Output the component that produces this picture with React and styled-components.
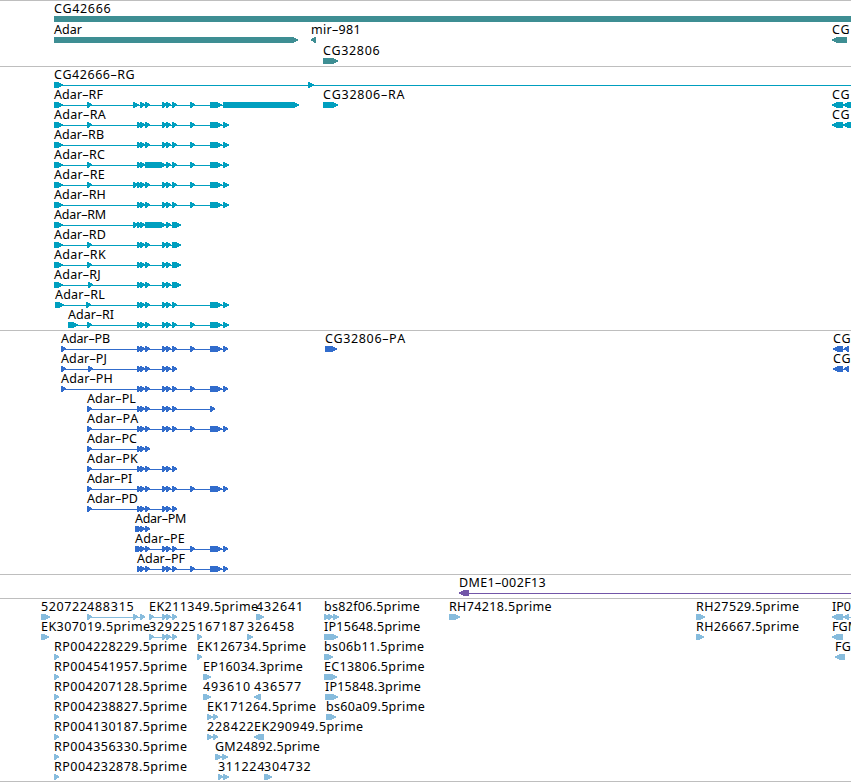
import React from "react";
import styled, { createGlobalStyle } from "styled-components";

const FONT = '12.5px "Noto Sans"';
const VIEW_WIDTH = 851;

const GlobalStyle = createGlobalStyle`
  * { box-sizing: border-box; }
  body { margin: 0; background: #fff; overflow: hidden; }
`;

const Browser = styled.main`
  width: ${VIEW_WIDTH}px;
  height: 782px;
  overflow: hidden;
  display: flex;
  flex-direction: column;
  background: #fff;
  border-bottom: 1px solid #bebebe;
`;

const TrackPanel = styled.section`
  flex: none;
  height: ${(p) => p.$height}px;
  padding-top: 2px;
  border-top: 1px solid #bebebe;
  color: ${(p) => p.$color};
  overflow: hidden;
`;

const TrackRow = styled.div`
  height: ${(p) => p.$pitch}px;
  display: grid;
  grid-template-rows: 13px 6px;
`;

const LabelLane = styled.div`
  display: grid;
  width: ${VIEW_WIDTH}px;
  overflow: visible;
`;

const Label = styled.span`
  grid-area: 1 / 1;
  justify-self: start;
  font: ${FONT}, sans-serif;
  line-height: 12px;
  white-space: pre;
  color: #000;
  font-kerning: none;
`;

const GlyphLane = styled.svg`
  display: block;
  fill: currentColor;
  shape-rendering: crispEdges;
`;

const measureContext = document.createElement("canvas").getContext("2d");

function spacingFor(text, width) {
  if (!width) return 0;
  measureContext.font = FONT;
  return (width - measureContext.measureText(text).width) / text.length;
}

function Exon({ start, end, reverse }) {
  const length = end - start;
  const shoulder = length > 6 ? 5.4 : length - 0.9;
  const points = reverse
    ? `${end},0 ${start + shoulder},0 ${start},2.3 ${start},3.6 ${start + shoulder},6 ${end},6`
    : `${start},0 ${end - shoulder},0 ${end},2.3 ${end},3.6 ${end - shoulder},6 ${start},6`;
  return <polygon points={points} />;
}

function Feature({ exons, reverse, solid, extend }) {
  const start = exons[0][0];
  const end = extend ? VIEW_WIDTH : exons[exons.length - 1][1];
  if (solid) return <rect x={start} y="0" width={end - start} height="6" />;
  return (
    <g>
      {(exons.length > 1 || extend) && <rect x={start} y="3" width={end - start} height="1" />}
      {exons.map(([a, b], i) => (
        <Exon key={i} start={a} end={b} reverse={reverse} />
      ))}
    </g>
  );
}

const feature = (name, x, width, exons, options = {}) => ({ name, x, width, exons, ...options });

const LEFT = { reverse: true };
const START = [54, 63];
const E2 = [87, 92];
const E133 = [133, 138];
const TRIO = [[137, 142], [140, 145], [145, 150]];
const LONG = [[137, 142], [140, 145], [145, 166], [166, 171]];
const PAIR = [[162, 167], [166, 171]];
const E172 = [172, 177];
const E190 = [190, 195];
const CLUSTER = [[210, 215], [212, 218], [213, 222]];
const TAIL = [...CLUSTER, [223, 229]];
const PTAIL = [...CLUSTER, [223, 228]];
const MIDDLE = [...TRIO, ...PAIR, E172];
const SHORT = [...TRIO, ...PAIR, [172, 181]];
const FULL = [...MIDDLE, E190, ...TAIL];
const PFULL = [...MIDDLE, E190, ...PTAIL];

const rightTranscript = feature("CG", 832, 18, [[832, 843], [843, 853]], LEFT);
const rightProtein = feature("CG", 833, 18, [[833, 843], [844, 849]], LEFT);

const geneRows = [
  [feature("CG42666", 54, 57, [[54, 851]], { solid: true })],
  [
    feature("Adar", 54, 28, [[54, 298]]),
    feature("mir–981", 311, 50, [[311, 316]], LEFT),
    feature("CG", 832, 18, [[832, 847]], LEFT),
  ],
  [feature("CG32806", 323, 57, [[323, 338]])],
];

const transcriptRows = [
  [feature("CG42666–RG", 54, 81, [START, [308, 314]], { extend: true })],
  [
    feature("Adar–RF", 54, 49, [START, E2, [133, 139], [140, 145], [145, 150], ...PAIR, E172, E190, ...CLUSTER, [223, 299]]),
    feature("CG32806–RA", 323, 82, [[323, 328], [325, 338]]),
    rightTranscript,
  ],
  [feature("Adar–RA", 54, 52, [START, E2, ...FULL]), rightTranscript],
  [feature("Adar–RB", 54, 50, [START, ...FULL])],
  [feature("Adar–RC", 54, 51, [START, E2, ...LONG, E172, E190, ...TAIL])],
  [feature("Adar–RE", 54, 51, [START, E2, E133, ...FULL])],
  [feature("Adar–RH", 54, 52, [START, ...FULL])],
  [feature("Adar–RM", 54, 52, [START, E133, ...LONG, [172, 181]])],
  [feature("Adar–RD", 54, 52, [START, E2, ...SHORT])],
  [feature("Adar–RK", 54, 52, [START, E2, ...SHORT])],
  [feature("Adar–RJ", 54, 47, [START, [88, 93], ...SHORT])],
  [feature("Adar–RL", 55, 50, [[55, 64], [86, 91], ...MIDDLE, ...TAIL])],
  [feature("Adar–RI", 68, 46, [[68, 78], E2, ...FULL])],
];

const proteinRows = [
  [
    feature("Adar–PB", 61, 49, [[61, 66], ...PFULL]),
    feature("CG32806–PA", 325, 80, [[325, 337]]),
    rightProtein,
  ],
  [feature("Adar–PJ", 61, 46, [[61, 66], [88, 93], ...MIDDLE]), rightProtein],
  [feature("Adar–PH", 61, 52, [[61, 66], ...PFULL])],
  [feature("Adar–PL", 87, 49, [E2, ...MIDDLE, [210, 215]])],
  [feature("Adar–PA", 87, 51, [E2, ...PFULL])],
  [feature("Adar–PC", 87, 50, [E2, ...TRIO])],
  [feature("Adar–PK", 87, 51, [E2, ...MIDDLE])],
  [feature("Adar–PI", 87, 45, [E2, ...PFULL])],
  [feature("Adar–PD", 87, 51, [E2, ...MIDDLE])],
  [feature("Adar–PM", 135, 51, [[135, 140], ...TRIO])],
  [feature("Adar–PE", 135, 50, [[135, 140], ...PFULL])],
  [feature("Adar–PF", 137, 48, PFULL)],
];

const insertionRows = [[feature("DME1–002F13", 459, 87, [[459, 469]], { reverse: true, extend: true })]];

const rp = (id) => feature(`RP00${id}.5prime`, 54, 133.5, [[54, 59]]);
const LINKED = [[149, 154], [162, 167], [166, 171], [172, 177]];

const cdnaRows = [
  [
    feature("520722", 41, 46.5, [[41, 50]]),
    feature("488315", 87, 47.5, [E2, E133, [140, 145]]),
    feature("EK211349.5prime", 149, 109.5, LINKED),
    feature("432641", 256, 48, [[256, 264]]),
    feature("bs82f06.5prime", 324, 96, [[324, 330], [328, 333], [333, 339]]),
    feature("RH74218.5prime", 449, 103, [[449, 460]]),
    feature("RH27529.5prime", 696, 103.5, [[696, 705]]),
    feature("IP0", 832, 19, [[832, 843], [843, 849]], { reverse: true, extend: true }),
  ],
  [
    feature("EK307019.5prime", 41, 109.5, [[41, 49]]),
    feature("329225", 149, 47.5, LINKED),
    feature("167187", 197, 48, [[197, 202]]),
    feature("326458", 247, 48, [[247, 253]]),
    feature("IP15648.5prime", 324, 96.5, [[324, 338]]),
    feature("RH26667.5prime", 696, 103.5, [[696, 704]]),
    feature("FGM", 832, 27, [[832, 843]], LEFT),
  ],
  [
    rp("4228229"),
    feature("EK126734.5prime", 197, 109.5, [[197, 202]]),
    feature("bs06b11.5prime", 324, 100.5, [[324, 333]]),
    feature("FG", 835, 16, [[835, 845]], LEFT),
  ],
  [
    rp("4541957"),
    feature("EP16034.3prime", 203, 100, [[203, 211]]),
    feature("EC13806.5prime", 324, 101, [[324, 337]]),
  ],
  [
    rp("4207128"),
    feature("493610", 203, 48, [[203, 211]]),
    feature("436577", 254, 48, [[254, 261]], LEFT),
    feature("IP15848.3prime", 325, 96, [[325, 338]]),
  ],
  [
    rp("4238827"),
    feature("EK171264.5prime", 207, 109.5, [[207, 213], [213, 218]]),
    feature("bs60a09.5prime", 326, 99, [[326, 336]]),
  ],
  [
    rp("4130187"),
    feature("228422", 207, 47.5, [[207, 213], [213, 218]]),
    feature("EK290949.5prime", 254, 109.5, [[254, 264]], LEFT),
  ],
  [rp("4356330"), feature("GM24892.5prime", 215, 105, [[215, 222], [222, 228]])],
  [
    rp("4232878"),
    feature("311224", 218, 47, [[218, 223], [223, 229]]),
    feature("304732", 264, 47.5, [[264, 272]]),
  ],
];

const tracks = [
  { id: "genes", color: "#3e8e93", height: 66, pitch: 21, rows: geneRows },
  { id: "transcripts", color: "#009fbf", height: 264, pitch: 20, rows: transcriptRows },
  { id: "proteins", color: "#316ccc", height: 244, pitch: 20, rows: proteinRows },
  { id: "insertions", color: "#7256a8", height: 24, pitch: 20, rows: insertionRows },
  { id: "cdnas", color: "#87bcdd", height: 183, pitch: 20, rows: cdnaRows },
];

function Track({ track }) {
  return (
    <TrackPanel $height={track.height} $color={track.color}>
      {track.rows.map((row, i) => (
        <TrackRow key={i} $pitch={track.pitch}>
          <LabelLane>
            {row.map((item) => (
              <Label
                key={item.name}
                style={{ marginLeft: item.x, letterSpacing: spacingFor(item.name, item.width) }}
              >
                {item.name}
              </Label>
            ))}
          </LabelLane>
          <GlyphLane width={VIEW_WIDTH} height="6" viewBox={`0 0 ${VIEW_WIDTH} 6`}>
            {row.map((item) => (
              <Feature key={item.name} {...item} />
            ))}
          </GlyphLane>
        </TrackRow>
      ))}
    </TrackPanel>
  );
}

export default function App() {
  return (
    <>
      <GlobalStyle />
      <Browser>
        {tracks.map((track) => (
          <Track key={track.id} track={track} />
        ))}
      </Browser>
    </>
  );
}
